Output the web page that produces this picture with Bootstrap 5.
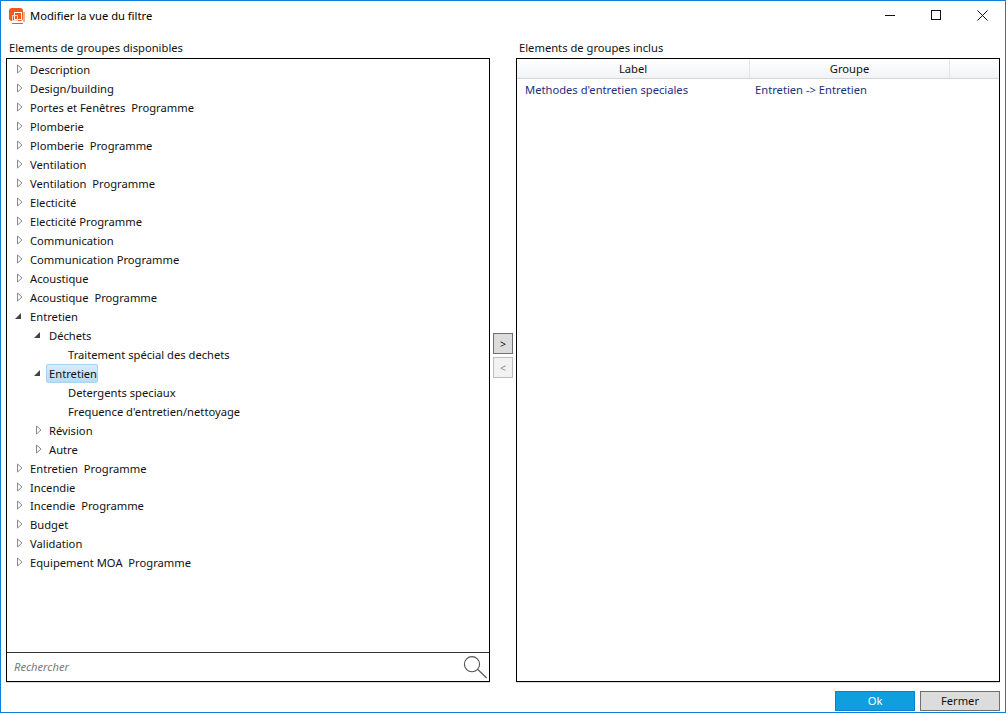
<!doctype html>
<html lang="fr">

<head>
  <meta charset="utf-8" />
  <meta name="viewport" content="width=device-width, initial-scale=1" />
  <title>Modifier la vue du filtre</title>
  <link href="https://cdn.jsdelivr.net/npm/bootstrap@5.3.0/dist/css/bootstrap.min.css" rel="stylesheet" />
  <style>
    html, body { height: 100%; }

    body {
      font-family: "Noto Sans", "Open Sans", sans-serif;
      font-size: 11.2px;
      line-height: 19px;
      color: #111;
      background: #fff;
      overflow: hidden;
    }

    .win-frame {
      height: 713px;
      border: 1px solid #0f7fd8;
    }

    .title-bar { height: 29px; padding-left: 8px; }
    .title-bar .app-icon { margin-right: 5px; }
    .title-text { font-size: 11.2px; color: #000; }

    .win-ctl {
      width: 46px;
      height: 29px;
      padding: 0;
      border: 0;
      border-radius: 0;
      background: transparent;
    }

    .win-body { padding: 8px 5px 5px 5px; min-height: 0; }
    .pane-col { width: 484px; min-height: 0; }
    .pane-label { height: 20px; padding: 1px 0 1px 3px; line-height: 18px; color: #111; }

    .pane-box {
      border: 1px solid #000;
      min-height: 0;
      box-shadow: 0 1px 0 #ddd;
    }

    .tree-list { padding-top: 1.22px; min-height: 0; }

    .tree-row { height: 18.97px; }
    .tree-row.lvl0 { padding-left: 6px; }
    .tree-row.lvl1 { padding-left: 25px; }
    .tree-row.lvl2 { padding-left: 44px; }

    .tree-exp { width: 14px; height: 19px; flex: none; }
    .tree-exp svg { display: block; overflow: visible; }

    .tree-label {
      padding: 0 0 0 2px;
      height: 19px;
      line-height: 18px;
      border: 1px solid transparent;
      white-space: pre;
    }

    .tree-label.is-sel {
      background: linear-gradient(#d6ecfb, #b9dcf5);
      border-color: #a8d4f2;
      border-radius: 2px;
    }

    .search-row { height: 29px; border-top: 1px solid #333; padding-left: 7px; }

    .search-input {
      border: 0;
      border-radius: 0;
      padding: 0;
      font-size: 11.2px;
      font-style: italic;
      box-shadow: none !important;
      color: #777;
      background: transparent;
    }

    .search-input::placeholder { color: #7a7a7a; opacity: 1; }

    .mid-col { width: 26px; }
    .move-group { margin-bottom: 6px; }

    .move-btn {
      width: 20px;
      height: 21px;
      padding: 0;
      border-radius: 0;
      font-size: 10.5px;
      line-height: 18px;
      margin-bottom: 3px;
      color: #111;
      background: #dcdcdc;
      border: 1px solid #707070;
    }

    .move-btn.is-off {
      color: #888;
      background: #f2f2f2;
      border-color: #bcbcbc;
      opacity: 1;
    }

    .grid-head { height: 20px; border-bottom: 1px solid #d5d5d5; background: linear-gradient(#fff, #f1f3f6); }
    .grid-cell { text-align: center; line-height: 20px; border-right: 1px solid #e3e5e8; color: #111; }
    .col-label { width: 233px; }
    .col-groupe { width: 200px; }
    .grid-row { height: 20px; color: #1d2f7c; }
    .grid-row .cell-a { width: 230px; margin-left: 8px; }

    .foot-row { height: 25px; padding: 4px 5px 0 0; }

    .foot-btn {
      width: 80px;
      height: 20px;
      padding: 0;
      border-radius: 0;
      font-size: 11.2px;
      line-height: 18px;
    }

    .btn-ok { background: #0e9fdc; border: 1px solid #0a80d8; color: #fff; margin-right: 5px; }
    .btn-close-win { background: #dcdcdc; border: 1px solid #707070; color: #111; }
  </style>
</head>

<body>
  <div class="win-frame d-flex flex-column">
    <div class="title-bar d-flex align-items-center">
      <svg class="app-icon" width="16" height="16" viewBox="0 0 16 16">
        <rect x="0" y="0" width="14" height="13" rx="3" fill="#ee5a1e" />
        <path d="M3 15.5h11M15 14V4" stroke="#ee5a1e" stroke-width="1" fill="none" />
        <rect x="5.5" y="4.5" width="7" height="7" fill="none" stroke="#fff" stroke-width="1" />
        <rect x="3.5" y="7.5" width="5" height="5" fill="none" stroke="#fbd2bf" stroke-width="1" />
      </svg>
      <span class="title-text flex-grow-1">Modifier la vue du filtre</span>
      <button class="btn win-ctl d-flex align-items-center justify-content-center" type="button" aria-label="Réduire">
        <svg width="11" height="11" viewBox="0 0 11 11"><path d="M0 5.5h10" stroke="#111" fill="none" /></svg>
      </button>
      <button class="btn win-ctl d-flex align-items-center justify-content-center" type="button" aria-label="Agrandir">
        <svg width="11" height="11" viewBox="0 0 11 11"><rect x="0.5" y="0.5" width="9" height="9" stroke="#111" fill="none" /></svg>
      </button>
      <button class="btn win-ctl d-flex align-items-center justify-content-center" type="button" aria-label="Fermer">
        <svg width="11" height="11" viewBox="0 0 11 11"><path d="M0.5 0.5l10 10M10.5 0.5l-10 10" stroke="#111" fill="none" /></svg>
      </button>
    </div>

    <div class="win-body d-flex flex-grow-1">
      <div class="pane-col d-flex flex-column">
        <div class="pane-label">Elements de groupes disponibles</div>
        <div class="pane-box d-flex flex-column flex-grow-1">
          <div class="tree-list flex-grow-1" id="tree"></div>
          <div class="search-row d-flex align-items-center">
            <input class="form-control search-input flex-grow-1" type="text" placeholder="Rechercher" />
            <svg width="27" height="27" viewBox="0 0 27 27">
              <circle cx="9.5" cy="10" r="8" fill="none" stroke="#555" stroke-width="1.2" />
              <path d="M15.5 15.5l9.5 9" stroke="#555" stroke-width="1.4" fill="none" />
            </svg>
          </div>
        </div>
      </div>

      <div class="mid-col d-flex flex-column align-items-center justify-content-center">
        <div class="move-group d-flex flex-column align-items-center">
          <button class="btn move-btn" type="button">&gt;</button>
          <button class="btn move-btn is-off" type="button" disabled>&lt;</button>
        </div>
      </div>

      <div class="pane-col d-flex flex-column">
        <div class="pane-label">Elements de groupes inclus</div>
        <div class="pane-box flex-grow-1">
          <div class="grid-head d-flex">
            <div class="grid-cell col-label">Label</div>
            <div class="grid-cell col-groupe">Groupe</div>
          </div>
          <div class="grid-row d-flex align-items-center">
            <div class="cell-a">Methodes d'entretien speciales</div>
            <div>Entretien -&gt; Entretien</div>
          </div>
        </div>
      </div>
    </div>

    <div class="foot-row d-flex justify-content-end">
      <button class="btn foot-btn btn-ok" type="button">Ok</button>
      <button class="btn foot-btn btn-close-win" type="button">Fermer</button>
    </div>
  </div>

  <script>
    // level, text, expander state: c = collapsed, o = open, n = none
    const treeRows = [
      [0, "Description", "c"],
      [0, "Design/building", "c"],
      [0, "Portes et Fenêtres  Programme", "c"],
      [0, "Plomberie", "c"],
      [0, "Plomberie  Programme", "c"],
      [0, "Ventilation", "c"],
      [0, "Ventilation  Programme", "c"],
      [0, "Electicité", "c"],
      [0, "Electicité Programme", "c"],
      [0, "Communication", "c"],
      [0, "Communication Programme", "c"],
      [0, "Acoustique", "c"],
      [0, "Acoustique  Programme", "c"],
      [0, "Entretien", "o"],
      [1, "Déchets", "o"],
      [2, "Traitement spécial des dechets", "n"],
      [1, "Entretien", "o", true],
      [2, "Detergents speciaux", "n"],
      [2, "Frequence d'entretien/nettoyage", "n"],
      [1, "Révision", "c"],
      [1, "Autre", "c"],
      [0, "Entretien  Programme", "c"],
      [0, "Incendie", "c"],
      [0, "Incendie  Programme", "c"],
      [0, "Budget", "c"],
      [0, "Validation", "c"],
      [0, "Equipement MOA  Programme", "c"]
    ];

    const icons = {
      c: '<svg width="18" height="19" viewBox="0 0 18 19"><path d="M4.5 5v8l4.5-4z" fill="#fff" stroke="#8a8a8a"/></svg>',
      o: '<svg width="18" height="19" viewBox="0 0 18 19"><path d="M2 12h6V6z" fill="#444"/></svg>',
      n: ''
    };

    const tree = document.getElementById("tree");
    treeRows.forEach(row => {
      const el = document.createElement("div");
      el.className = "tree-row d-flex align-items-center lvl" + row[0];
      const sel = row[3] ? " is-sel" : "";
      el.innerHTML = `<span class="tree-exp">${icons[row[2]]}</span><span class="tree-label${sel}"></span>`;
      el.querySelector(".tree-label").textContent = row[1];
      tree.appendChild(el);
    });
  </script>
  <script src="https://cdn.jsdelivr.net/npm/bootstrap@5.3.0/dist/js/bootstrap.bundle.min.js"></script>
</body>

</html>
